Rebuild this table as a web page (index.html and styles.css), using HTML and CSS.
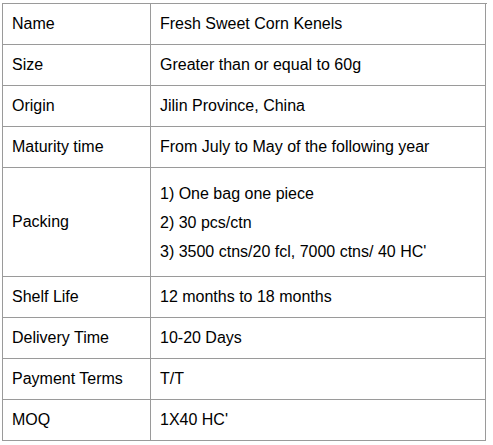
FILE: index.html
```html
<!DOCTYPE html>
<html>
<head>
<meta charset="utf-8">
<link rel="stylesheet" href="styles.css">
</head>
<body>
<div class="spec">
  <div class="cell key">Name</div><div class="cell val">Fresh Sweet Corn Kenels</div>
  <div class="cell key">Size</div><div class="cell val">Greater than or equal to 60g</div>
  <div class="cell key">Origin</div><div class="cell val">Jilin Province, China</div>
  <div class="cell key">Maturity time</div><div class="cell val">From July to May of the following year</div>
  <div class="cell key tall">Packing</div>
  <div class="cell val tall">
    <div class="line">1) One bag one piece</div>
    <div class="line">2) 30 pcs/ctn</div>
    <div class="line">3) 3500 ctns/20 fcl, 7000 ctns/ 40 HC'</div>
  </div>
  <div class="cell key">Shelf Life</div><div class="cell val">12 months to 18 months</div>
  <div class="cell key">Delivery Time</div><div class="cell val">10-20 Days</div>
  <div class="cell key">Payment Terms</div><div class="cell val">T/T</div>
  <div class="cell key">MOQ</div><div class="cell val">1X40 HC'</div>
</div>
</body>
</html>
```
FILE: styles.css
```css
html, body {
  margin: 0;
  padding: 0;
  background: #fff;
}
body {
  font-family: "Liberation Sans", Arial, sans-serif;
  font-size: 16px;
  color: #000;
}
.spec {
  margin: 3px 0 0 2px;
  width: 484px;
  display: grid;
  grid-template-columns: 148px 335px;
  border-left: 1px solid #9a9a9a;
  border-top: 1px solid #9a9a9a;
}
.cell {
  box-sizing: border-box;
  height: 41px;
  padding: 0 9px;
  border-right: 1px solid #9a9a9a;
  border-bottom: 1px solid #9a9a9a;
  display: flex;
  flex-direction: column;
  justify-content: center;
  line-height: 20px;
  min-width: 0;
}
.cell.tall {
  height: 109px;
}
.line {
  line-height: 29px;
}
```
